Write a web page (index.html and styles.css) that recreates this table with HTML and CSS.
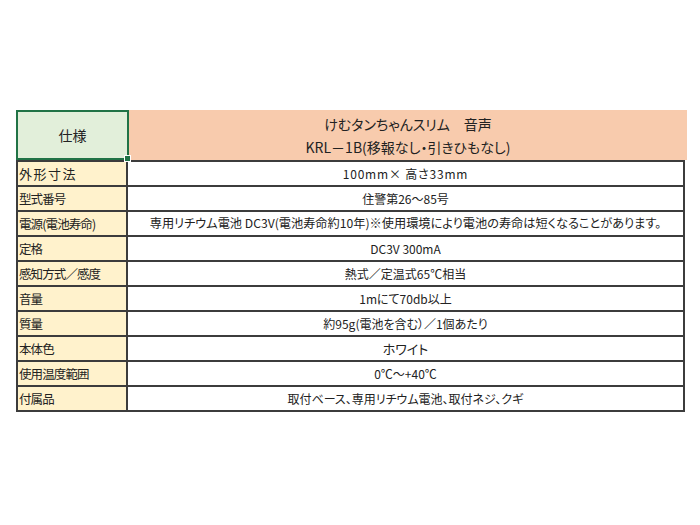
FILE: index.html
```html
<!DOCTYPE html>
<html lang="ja">
<head>
<meta charset="utf-8">
<title>仕様</title>
<link rel="stylesheet" href="styles.css">
</head>
<body>
<div class="sheet">
  <div class="head">
    <div class="h-label">仕様</div>
    <div class="h-model">
      <div>けむタンちゃんスリム　音声</div>
      <div>KRL－1B(移報なし・引きひもなし)</div>
    </div>
  </div>
  <div class="body">
    <div class="row"><div class="label wide">外形寸法</div><div class="value spaced">100mm× 高さ33mm</div></div>
    <div class="row"><div class="label">型式番号</div><div class="value">住警第26～85号</div></div>
    <div class="row"><div class="label">電源(電池寿命)</div><div class="value long">専用リチウム電池 DC3V(電池寿命約10年)※使用環境により電池の寿命は短くなることがあります。</div></div>
    <div class="row"><div class="label">定格</div><div class="value">DC3V 300mA</div></div>
    <div class="row"><div class="label">感知方式／感度</div><div class="value">熱式／定温式65℃相当</div></div>
    <div class="row"><div class="label">音量</div><div class="value">1mにて70db以上</div></div>
    <div class="row"><div class="label">質量</div><div class="value">約95g(電池を含む）／1個あたり</div></div>
    <div class="row"><div class="label">本体色</div><div class="value big">ホワイト</div></div>
    <div class="row"><div class="label">使用温度範囲</div><div class="value">0℃～+40℃</div></div>
    <div class="row"><div class="label">付属品</div><div class="value">取付ベース、専用リチウム電池、取付ネジ、クギ</div></div>
  </div>
</div>
</body>
</html>
```

FILE: styles.css
```css
html, body {
  margin: 0;
  padding: 0;
  background: #ffffff;
}
body {
  font-family: "Noto Sans CJK JP", "Noto Sans", sans-serif;
  font-feature-settings: "palt";
  color: #222222;
}
.sheet {
  margin: 110px 0 0 16px;
  width: 669px;
}
.head {
  display: flex;
  height: 50px;
}
.h-label {
  position: relative;
  box-sizing: border-box;
  width: 113px;
  height: 50px;
  background: #e2efda;
  border: 2px solid #217346;
  display: flex;
  align-items: center;
  justify-content: center;
  font-size: 14px;
}
.h-label::after {
  content: "";
  position: absolute;
  right: -4px;
  bottom: -4px;
  width: 5px;
  height: 5px;
  background: #217346;
  border: 1px solid #ffffff;
}
.h-model {
  flex: 1;
  margin-right: -2px;
  background: #f8cbad;
  display: flex;
  flex-direction: column;
  justify-content: center;
  align-items: center;
  font-size: 14px;
  line-height: 23px;
  padding-top: 1px;
  box-sizing: border-box;
}
.body {
  border-top: 2px solid #3c3c3c;
  border-left: 2px solid #3c3c3c;
  border-right: 2px solid #3c3c3c;
}
.row {
  display: flex;
  height: 25px;
  box-sizing: border-box;
  border-bottom: 2px solid #3c3c3c;
}
.label {
  box-sizing: border-box;
  width: 110px;
  background: #fff2cc;
  border-right: 2px solid #3c3c3c;
  font-size: 12.5px;
  letter-spacing: -0.9px;
  line-height: 23px;
  padding-left: 1px;
  white-space: nowrap;
}
.label.wide {
  font-size: 13px;
  letter-spacing: 1.5px;
}
.value {
  flex: 1;
  text-align: center;
  font-size: 12px;
  line-height: 23px;
  white-space: nowrap;
}
.value.spaced {
  letter-spacing: 0.8px;
}
.value.long {
  font-size: 12.2px;
}
.value.big {
  font-size: 13px;
}
```
